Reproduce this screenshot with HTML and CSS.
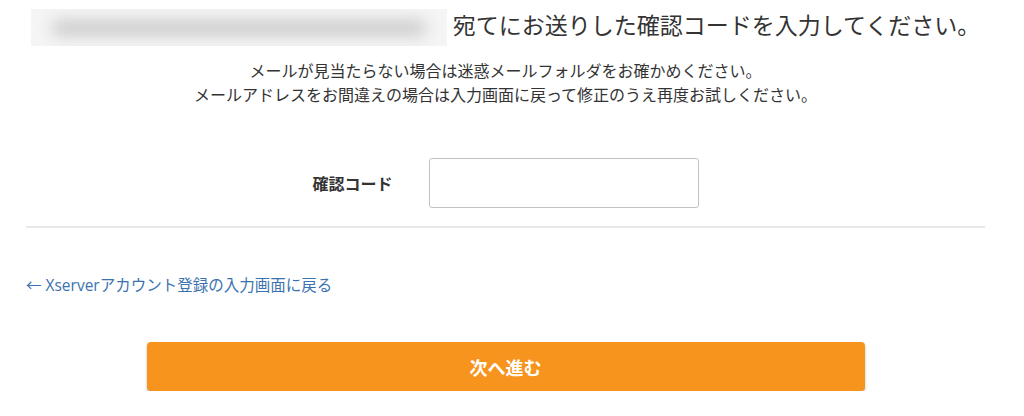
FILE: index.html
```html
<!DOCTYPE html>
<html lang="ja">
<head>
<meta charset="utf-8">
<title>確認コード入力</title>
<link rel="stylesheet" href="styles.css">
</head>
<body>
<main class="page">
  <header class="head">
    <div class="email-mask" aria-hidden="true"><div class="email-blur"></div></div>
    <h1 class="title">宛てにお送りした確認コードを入力してください。</h1>
  </header>
  <p class="note">メールが見当たらない場合は迷惑メールフォルダをお確かめください。<br>メールアドレスをお間違えの場合は入力画面に戻って修正のうえ再度お試しください。</p>
  <div class="field">
    <label class="label" for="code">確認コード</label>
    <input class="input" id="code" type="text">
  </div>
  <hr class="rule">
  <a class="back" href="#">← Xserverアカウント登録の入力画面に戻る</a>
  <div class="actions">
    <button class="btn" type="button">次へ進む</button>
  </div>
</main>
</body>
</html>
```

FILE: styles.css
```css
html, body {
  margin: 0;
  padding: 0;
  background: #fff;
}
body {
  font-family: "Noto Sans CJK JP", "Noto Sans", sans-serif;
  color: #333;
}
.page {
  width: 959px;
  margin-left: 26px;
  padding-top: 9px;
}
.head {
  display: flex;
  justify-content: center;
  align-items: flex-start;
  gap: 6px;
}
.email-mask {
  width: 416px;
  height: 37px;
  background: #f5f5f5;
  overflow: hidden;
  display: flex;
  align-items: center;
  justify-content: center;
}
.email-blur {
  width: 372px;
  height: 14px;
  background: #c6c6c6;
  filter: blur(8px);
}
.title {
  margin: 0;
  font-size: 23px;
  font-weight: 400;
  line-height: 30px;
  color: #333;
  white-space: nowrap;
}
.note {
  margin: 12px 0 0;
  text-align: center;
  font-size: 16px;
  line-height: 24px;
  color: #333;
}
.field {
  margin-top: 52px;
  display: flex;
  justify-content: center;
  align-items: center;
  gap: 36px;
}
.label {
  font-size: 16px;
  font-weight: 700;
  color: #333;
  width: 80px;
}
.input {
  box-sizing: border-box;
  width: 270px;
  height: 50px;
  border: 1px solid #c2c2c2;
  border-radius: 3px;
  background: #fff;
  margin: 0;
}
.rule {
  margin: 18px 0 0;
  border: 0;
  height: 2px;
  background: #e8e8e8;
}
.back {
  display: block;
  margin-top: 45px;
  font-family: "Open Sans", "Noto Sans CJK JP", sans-serif;
  font-size: 15.5px;
  line-height: 24px;
  color: #3b73b0;
  text-decoration: none;
}
.actions {
  margin-top: 45px;
  display: flex;
  justify-content: center;
}
.btn {
  width: 718px;
  height: 49px;
  border: 0;
  border-radius: 4px;
  background: #f7941e;
  color: #fff;
  font-family: "Noto Sans CJK JP", "Noto Sans", sans-serif;
  font-size: 18px;
  font-weight: 700;
  box-shadow: 0 2px 3px rgba(0, 0, 0, 0.25);
  cursor: pointer;
}
```
